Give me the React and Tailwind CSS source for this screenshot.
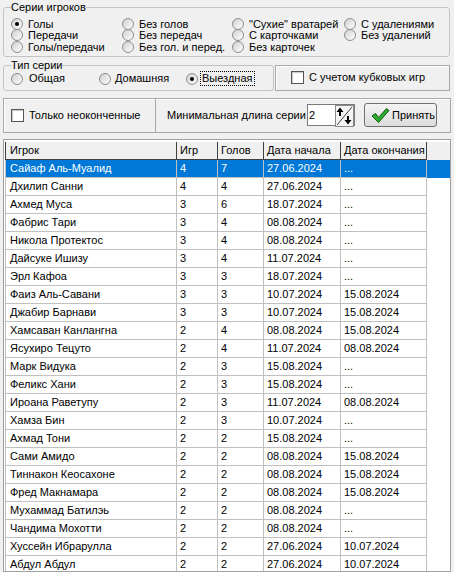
import React from "react";

const rows = [
    ["Сайаф Аль-Муалид", "4", "7", "27.06.2024", "..."],
    ["Дхилип Санни", "4", "4", "27.06.2024", "..."],
    ["Ахмед Муса", "3", "6", "18.07.2024", "..."],
    ["Фабрис Тари", "3", "4", "08.08.2024", "..."],
    ["Никола Протектос", "3", "4", "08.08.2024", "..."],
    ["Дайсуке Ишизу", "3", "4", "11.07.2024", "..."],
    ["Эрл Кафоа", "3", "3", "18.07.2024", "..."],
    ["Фаиз Аль-Савани", "3", "3", "10.07.2024", "15.08.2024"],
    ["Джабир Барнави", "3", "3", "10.07.2024", "15.08.2024"],
    ["Хамсаван Канлангна", "2", "4", "08.08.2024", "15.08.2024"],
    ["Ясухиро Тецуто", "2", "4", "11.07.2024", "08.08.2024"],
    ["Марк Видука", "2", "3", "15.08.2024", "..."],
    ["Феликс Хани", "2", "3", "15.08.2024", "..."],
    ["Ироана Раветупу", "2", "3", "11.07.2024", "08.08.2024"],
    ["Хамза Бин", "2", "3", "10.07.2024", "..."],
    ["Ахмад Тони", "2", "2", "15.08.2024", "..."],
    ["Сами Амидо", "2", "2", "08.08.2024", "15.08.2024"],
    ["Тиннакон Кеосахоне", "2", "2", "08.08.2024", "15.08.2024"],
    ["Фред Макнамара", "2", "2", "08.08.2024", "15.08.2024"],
    ["Мухаммад Батилэь", "2", "2", "08.08.2024", "..."],
    ["Чандима Мохотти", "2", "2", "08.08.2024", "..."],
    ["Хуссейн Ибрарулла", "2", "2", "27.06.2024", "10.07.2024"],
    ["Абдул Абдул", "2", "2", "27.06.2024", "10.07.2024"],
];

const seriesOptions = [
    ["Голы", true], ["Без голов"], ["\"Сухие\" вратарей"], ["С удалениями"],
    ["Передачи"], ["Без передач"], ["С карточками"], ["Без удалений"],
    ["Голы/передачи"], ["Без гол. и перед."], ["Без карточек"],
];

const Radio = ({checked}) => (
    <span className="w-[12px] h-[12px] shrink-0 rounded-full border border-[#8e8e8e] bg-linear-to-br from-[#d0d0d0] to-white flex items-center justify-center">
        {checked && <span className="w-[4px] h-[4px] rounded-full bg-black"/>}
    </span>
);

const Checkbox = () => (
    <span className="w-[13px] h-[13px] shrink-0 border border-[#555] bg-white shadow-[inset_1px_1px_1px_#c8c8c8]"/>
);

const SpinIcon = () => (
    <svg width="19" height="22" viewBox="0 0 19 22">
        <rect x="0.5" y="0.5" width="18" height="21" fill="#f4f4f4" stroke="#8a8a8a"/>
        <line x1="2" y1="20" x2="17" y2="2" stroke="#404040"/>
        <path d="M5 2.5 L1.5 7 H4 V11 H6 V7 H8.5 Z" fill="#000"/>
        <path d="M13 19.5 L9.5 15 H12 V11 H14 V15 H16.5 Z" fill="#000"/>
    </svg>
);

const CheckIcon = () => (
    <svg width="19" height="17" viewBox="0 0 19 17">
        <polygon points="1,9 4.5,6.5 7.5,10.5 15.5,1.5 18,3.5 7.5,15.5" fill="#2faa2f" stroke="#0d5e0d" strokeWidth="1" strokeLinejoin="round"/>
    </svg>
);

const cols = "grid grid-cols-[172px_41px_46px_77px_86px]";

export default function App() {
    return (
        <div className="w-[454px] h-[572px] overflow-hidden bg-[#f0f0f0] flex flex-col font-['Liberation_Sans',Arial,sans-serif] text-[11px] text-black">
            <fieldset className="mt-[1px] ml-[3px] w-[447px] border border-[#c4c4c4] rounded-[3px] pt-[4px] pb-[3px]">
                <legend className="ml-[7px] leading-[13px] whitespace-nowrap">Серии игроков</legend>
                <div className="grid grid-cols-[111px_110px_112px_1fr] auto-rows-[11.5px] pl-[7px]">
                    {seriesOptions.map(([label, checked], i) => (
                        <div key={i} className="flex items-center gap-[5px] h-full whitespace-nowrap">
                            <Radio checked={checked}/>
                            <span className="leading-[12px]">{label}</span>
                        </div>
                    ))}
                </div>
            </fieldset>

            <div className="flex mt-[2px]">
                <fieldset className="ml-[3px] w-[271px] border border-[#c4c4c4] rounded-[3px] pb-[3px]">
                    <legend className="ml-[7px] leading-[13px] whitespace-nowrap">Тип серии</legend>
                    <div className="h-[14px] flex items-center pl-[7px]">
                        <div className="w-[88px] flex items-center gap-[6px]">
                            <Radio/>
                            <span>Общая</span>
                        </div>
                        <div className="w-[87px] flex items-center gap-[4px]">
                            <Radio/>
                            <span>Домашняя</span>
                        </div>
                        <div className="flex items-center gap-[2px]">
                            <Radio checked/>
                            <span className="border border-dotted border-black px-[1px] leading-[13px]">Выездная</span>
                        </div>
                    </div>
                </fieldset>
                <div className="ml-[1px] mt-[6px] w-[175px] h-[26px] border border-[#a8a8a8] shadow-[inset_1px_1px_0_#ffffff] flex items-center pl-[15px] gap-[5px]">
                    <Checkbox/>
                    <span className="whitespace-nowrap">С учетом кубковых игр</span>
                </div>
            </div>

            <div className="mt-[7px] ml-[3px] w-[448px] h-[35px] border border-[#a8a8a8] shadow-[inset_1px_1px_0_#ffffff] flex">
                <div className="w-[152px] h-full border-r border-[#a8a8a8] flex items-center pl-[7px] gap-[5px]">
                    <Checkbox/>
                    <span className="whitespace-nowrap">Только неоконченные</span>
                </div>
                <div className="flex items-center pl-[11px]">
                    <span className="w-[140px] whitespace-nowrap">Минимальная длина серии</span>
                    <div className="flex h-[22px] border border-[#7a7a7a] bg-white">
                        <div className="w-[27px] pl-[1px] leading-[20px]">2</div>
                        <SpinIcon/>
                    </div>
                    <button className="ml-[9px] w-[73px] h-[24px] border border-[#707070] rounded-[3px] bg-linear-to-b from-[#f4f4f4] to-[#dcdcdc] flex items-center pl-[6px] gap-[2px] font-['Liberation_Sans',Arial,sans-serif] text-[11px]">
                        <CheckIcon/>
                        <span>Принять</span>
                    </button>
                </div>
            </div>

            <div className="mt-[6px] ml-[3px] w-[448px] flex-1 border border-[#a0a0a0] bg-white pt-[2px] pl-[1px] overflow-hidden">
                <div className={cols + " h-[18px] bg-[#f0f0f0]"}>
                    {["Игрок", "Игр", "Голов", "Дата начала", "Дата окончания"].map((h, i) => (
                        <div key={i} className={"border-r border-b border-[#404040] leading-[17px] whitespace-nowrap overflow-hidden " + (i === 0 ? "border-l pl-[4px]" : "pl-[3px]")}>
                            {h}
                        </div>
                    ))}
                </div>
                {rows.map((r, idx) => (
                    <div key={idx} className={cols + " h-[18px] " + (idx === 0 ? "bg-[#0078d7] text-white" : "")}>
                        {r.map((c, i) => (
                            <div key={i} className={"border-r border-b border-[#c0c0c0] leading-[17px] whitespace-nowrap overflow-hidden " + (i === 0 ? "border-l pl-[4px]" : "pl-[3px]")}>
                                {c}
                            </div>
                        ))}
                    </div>
                ))}
            </div>
        </div>
    )
}
